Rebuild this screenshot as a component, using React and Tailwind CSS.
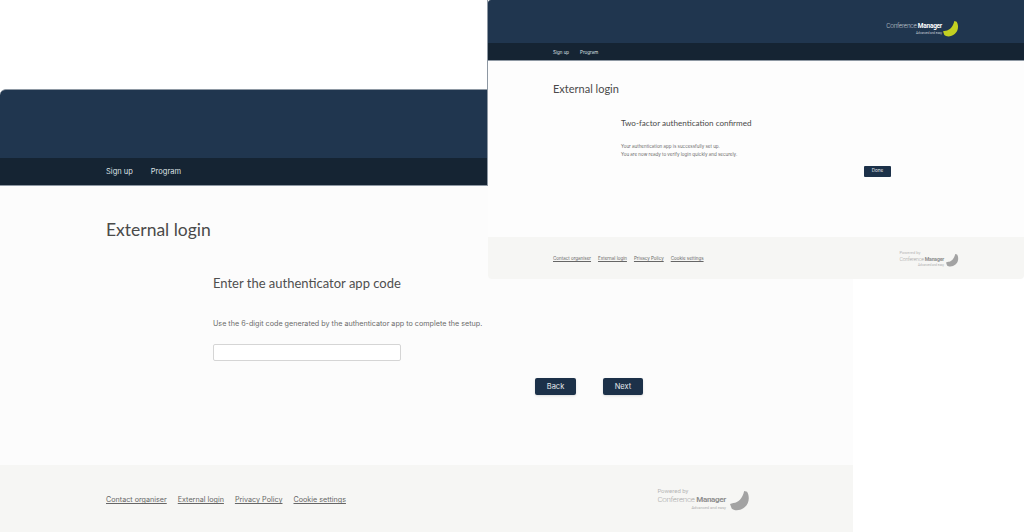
import React from "react";

const montserrat = "font-['Inter','Noto_Sans',sans-serif]";
const titillium = "font-['Lato','Noto_Sans',sans-serif]";

function Banana({ className, color }) {
  return (
    <svg viewBox="0 0 48 48" className={className} fill={color}>
      <path d="M0 31L8 29C20 28 30 18 34 0L41 2C48 14 46 30 35 39C25 48 10 48 4 42Z" />
    </svg>
  );
}

function HeaderLogo() {
  return (
    <div className="flex items-center gap-[1px]">
      <div className="flex flex-col items-end font-['Roboto',sans-serif] text-white">
        <div className="text-[6.5px] leading-[9px] tracking-[-0.25px] whitespace-nowrap">
          <span className="font-light text-[#c5ccd4]">Conference </span>
          <span className="font-bold">Manager</span>
        </div>
        <div className="text-[3px] leading-[4px] text-[#c5ccd4] whitespace-nowrap">Advanced and easy</div>
      </div>
      <Banana className="w-4 h-4" color="#c3d021" />
    </div>
  );
}

function FooterLogo({ big }) {
  return (
    <div className={`flex items-end font-['Roboto',sans-serif] text-[#8f8f8f] ${big ? "mb-[6px]" : "mb-[2px]"}`}>
      <div className="flex flex-col items-end">
        <div className={`self-start text-[#b5b5b5] whitespace-nowrap ${big ? "text-[6px] leading-[9px]" : "text-[4px] leading-[6px]"}`}>Powered by</div>
        <div className={`whitespace-nowrap ${big ? "text-[8px] leading-[10px] tracking-[-0.3px]" : "text-[5.2px] leading-[7px] tracking-[-0.2px]"}`}>
          <span className="font-light text-[#a8a8a8]">Conference </span>
          <span className="font-bold">Manager</span>
        </div>
        <div className={`text-[#b0b0b0] whitespace-nowrap ${big ? "text-[4px] leading-[5px]" : "text-[3px] leading-[4px]"}`}>Advanced and easy</div>
      </div>
      <Banana className={big ? "w-5 h-5 ml-1 -mb-px" : "w-[13px] h-[13px] ml-0.5"} color="#a3a3a3" />
    </div>
  );
}

function LoginWindow() {
  return (
    <div className={`absolute left-0 top-[89px] w-[853px] h-[443px] flex flex-col ${montserrat}`}>
      <div className="h-[69px] rounded-tl-[6px] bg-[#20364f] border-t border-[#8e98a3]" />
      <nav className="h-[27px] bg-[#152433] pl-[106px] flex items-center gap-[18px] text-[7.5px] text-[#dde1e5]">
        <span>Sign up</span>
        <span>Program</span>
      </nav>
      <main className="flex-1 bg-[#fcfcfc] border-t border-[#8e98a3] pl-[106px] pt-[32px]">
        <h1 className={`text-[17.5px] leading-6 text-[#4a4a4a] ${titillium}`}>External login</h1>
        <div className="pl-[107px] pt-[31px]">
          <h2 className={`text-[13px] leading-5 text-[#4f4f4f] ${titillium}`}>Enter the authenticator app code</h2>
          <p className="mt-[25px] text-[7.2px] leading-3 text-[#6a6a6a] whitespace-nowrap">
            Use the 6-digit code generated by the authenticator app to complete the setup.
          </p>
          <input className="block mt-[14px] w-[188px] h-[17px] bg-white border border-[#d5d5d5] rounded-[2px]" />
          <div className="flex gap-[27px] pl-[322px] mt-[17px]">
            <button className="w-[41px] h-[17px] bg-[#1c3149] text-[#e6e9ec] text-[7.5px] rounded-[2px] shadow-sm">Back</button>
            <button className="w-[40px] h-[17px] bg-[#1c3149] text-[#e6e9ec] text-[7.5px] rounded-[2px] shadow-sm">Next</button>
          </div>
        </div>
      </main>
      <footer className="h-[67px] shrink-0 bg-[#f6f6f4] pl-[106px] pr-[103px] pt-[4px] flex items-center justify-between text-[7.2px] text-[#666]">
        <div className="flex gap-[11px] underline">
          <span>Contact organiser</span>
          <span>External login</span>
          <span>Privacy Policy</span>
          <span>Cookie settings</span>
        </div>
        <FooterLogo big />
      </footer>
    </div>
  );
}

function ConfirmWindow() {
  return (
    <div className={`absolute left-[488px] top-0 w-[536px] h-[279px] flex flex-col ${montserrat}`}>
      <div className="h-[43px] rounded-tl-[3px] bg-[#20364f] flex items-center justify-end pr-[65px] pt-[14px]">
        <HeaderLogo />
      </div>
      <nav className="h-[17px] bg-[#152433] pl-[65px] pt-[3px] flex items-center gap-[11px] text-[4.5px] text-[#dde1e5]">
        <span>Sign up</span>
        <span>Program</span>
      </nav>
      <main className="flex-1 bg-[#fdfdfd] border-t border-[#8e98a3] pl-[65px] pt-[20px]">
        <h1 className={`text-[11px] leading-4 text-[#4a4a4a] ${titillium}`}>External login</h1>
        <div className="pl-[68px] pt-[20px]">
          <h2 className={`text-[8.1px] leading-3 text-[#4a4a4a] ${titillium}`}>Two-factor authentication confirmed</h2>
          <p className="mt-[14px] text-[4.5px] leading-[7.5px] text-[#6a6a6a] whitespace-nowrap">
            Your authentication app is successfully set up.
            <br />
            You are now ready to verify login quickly and securely.
          </p>
          <div className="flex pl-[243px] mt-[8px]">
            <button className="w-[27px] h-[11px] bg-[#1c3149] text-[#e6e9ec] text-[4.6px] rounded-[1px]">Done</button>
          </div>
        </div>
      </main>
      <footer className="h-[42px] shrink-0 rounded-b-[4px] bg-[#f6f6f4] pl-[65px] pr-[65px] pt-[2px] flex items-center justify-between text-[4.5px] text-[#666]">
        <div className="flex gap-[7px] underline">
          <span>Contact organiser</span>
          <span>External login</span>
          <span>Privacy Policy</span>
          <span>Cookie settings</span>
        </div>
        <FooterLogo />
      </footer>
    </div>
  );
}

export default function App() {
  return (
    <div className="relative w-[1024px] h-[532px] bg-white overflow-hidden">
      <LoginWindow />
      <ConfirmWindow />
      {/* edge of the top window */}
      <div className="absolute left-[487px] top-0 w-px h-[185px] bg-[#8e98a3]" />
    </div>
  );
}
